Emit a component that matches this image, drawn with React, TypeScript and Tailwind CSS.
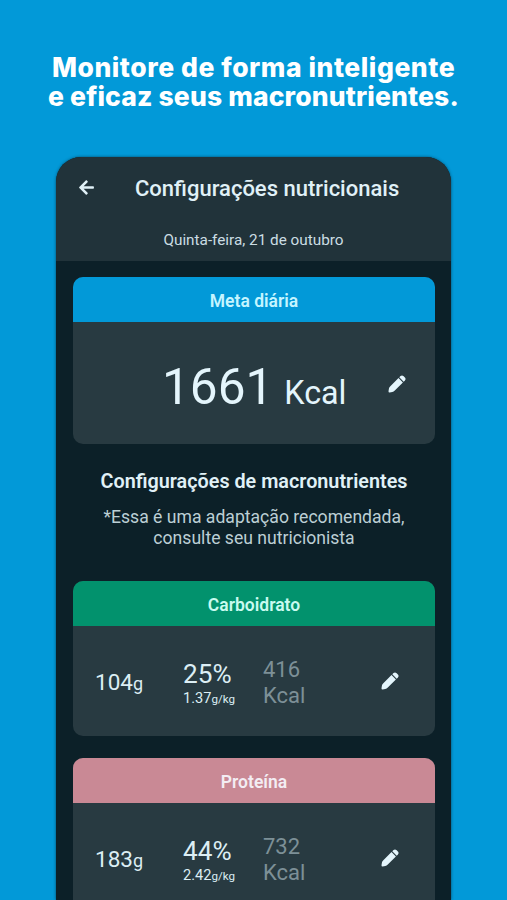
import { FaArrowLeft } from "react-icons/fa";

type Macro = {
  name: string;
  header: string;
  grams: string;
  percent: string;
  ratio: string;
  kcal: string;
};

const macros: Macro[] = [
  { name: "Carboidrato", header: "bg-[#02926d] text-[#c9fbf0]", grams: "104", percent: "25%", ratio: "1.37", kcal: "416" },
  { name: "Proteína", header: "bg-[#c98995] text-[#f3edf3]", grams: "183", percent: "44%", ratio: "2.42", kcal: "732" },
];

function Pencil({ className }: { className: string }) {
  return (
    <svg viewBox="0 0 18 18" fill="currentColor" className={`h-[18px] w-[18px] shrink-0 ${className}`}>
      <path d="M10.5 3.1 14.9 7.5 6.8 15.6Q5.7 16.7 4.3 17L1.7 17.5Q0.4 17.6 0.5 16.3L0.9 13.8Q1.1 12.5 2.1 11.5Z" />
      <path d="M11.3 2.3 12.5 1.1Q14 -0.2 15.4 1.1L16.9 2.6Q18.2 4 16.9 5.5L15.7 6.7Z" />
    </svg>
  );
}

function CardHeader({ title, className }: { title: string; className: string }) {
  return (
    <div className={`flex h-[45px] items-center justify-center pt-[4px] text-[17.5px] font-semibold whitespace-nowrap ${className}`}>
      {title}
    </div>
  );
}

function MacroCard({ macro }: { macro: Macro }) {
  return (
    <section className="h-[155px] shrink-0 overflow-hidden rounded-[10px] bg-[#283a41]">
      <CardHeader title={macro.name} className={macro.header} />
      <div className="flex h-[110px] pl-[22px] text-[#dceef4]">
        <div className="w-[88px] pt-[43px] text-[22.5px] leading-[26px]">
          {macro.grams}
          <span className="text-[18px]">g</span>
        </div>
        <div className="w-[80px] pt-[35px]">
          <div className="text-[26.2px] leading-[27px]">{macro.percent}</div>
          <div className="mt-[2px] text-[14.6px] leading-[16px]">
            {macro.ratio}
            <span className="text-[11.6px]">g/kg</span>
          </div>
        </div>
        <div className="w-[118px] pt-[31px] text-[22px] leading-[25.5px] text-[#7d9097]">
          {macro.kcal}
          <br />
          Kcal
        </div>
        <Pencil className="mt-[46px] text-[#e4f5fc]" />
      </div>
    </section>
  );
}

export default function App() {
  return (
    <div className="h-[900px] w-[507px] overflow-hidden bg-[#0299d8] font-['Roboto',sans-serif]">
      <h1 className="flex h-[157px] flex-col items-center pt-[53px] font-['Inter',sans-serif] text-[26.5px] leading-[29px] font-extrabold whitespace-nowrap text-white">
        <span className="tracking-[0.55px]">Monitore de forma inteligente</span>
        <span className="tracking-[0.15px]">e eficaz seus macronutrientes.</span>
      </h1>
      <main className="ml-[56px] h-[743px] w-[395px] overflow-hidden rounded-t-[25px] bg-[#0c2028] shadow-[0_0_3px_rgba(5,35,50,0.7)]">
        <header className="h-[104px] bg-[#21333a] text-[#e0f1f7]">
          <div className="flex h-[61px] items-center pl-[22px]">
            <FaArrowLeft className="size-[17px]" />
            <div className="ml-[40px] pt-[1px] text-[22px] font-medium whitespace-nowrap">Configurações nutricionais</div>
          </div>
          <div className="pt-[12px] text-center text-[15.3px] leading-[20px] whitespace-nowrap text-[#cbdde3]">Quinta-feira, 21 de outubro</div>
        </header>
        <div className="flex flex-col px-[17px] pr-[16px] pt-[16px]">
          <section className="h-[167px] overflow-hidden rounded-[10px] bg-[#283a41]">
            <CardHeader title="Meta diária" className="bg-[#0299d8] text-[#c5f5ff]" />
            <div className="flex h-[122px] text-[#e4f5fc]">
              <div className="flex w-[315px] items-baseline pt-[36px] pl-[89px] whitespace-nowrap">
                <span className="text-[49.5px] leading-[58px]">1661</span>
                <span className="ml-[11px] text-[32.3px]">Kcal</span>
              </div>
              <Pencil className="mt-[53px]" />
            </div>
          </section>
          <h2 className="mt-[25px] text-center text-[19.8px] leading-[26px] font-semibold whitespace-nowrap text-[#e0f1f7]">Configurações de macronutrientes</h2>
          <p className="mt-[12px] mb-[33px] text-center text-[17.6px] leading-[20.5px] whitespace-nowrap text-[#bccfd5]">
            *Essa é uma adaptação recomendada,
            <br />
            consulte seu nutricionista
          </p>
          <div className="flex flex-col gap-[22px]">
            {macros.map((m) => (
              <MacroCard key={m.name} macro={m} />
            ))}
          </div>
        </div>
      </main>
    </div>
  );
}
